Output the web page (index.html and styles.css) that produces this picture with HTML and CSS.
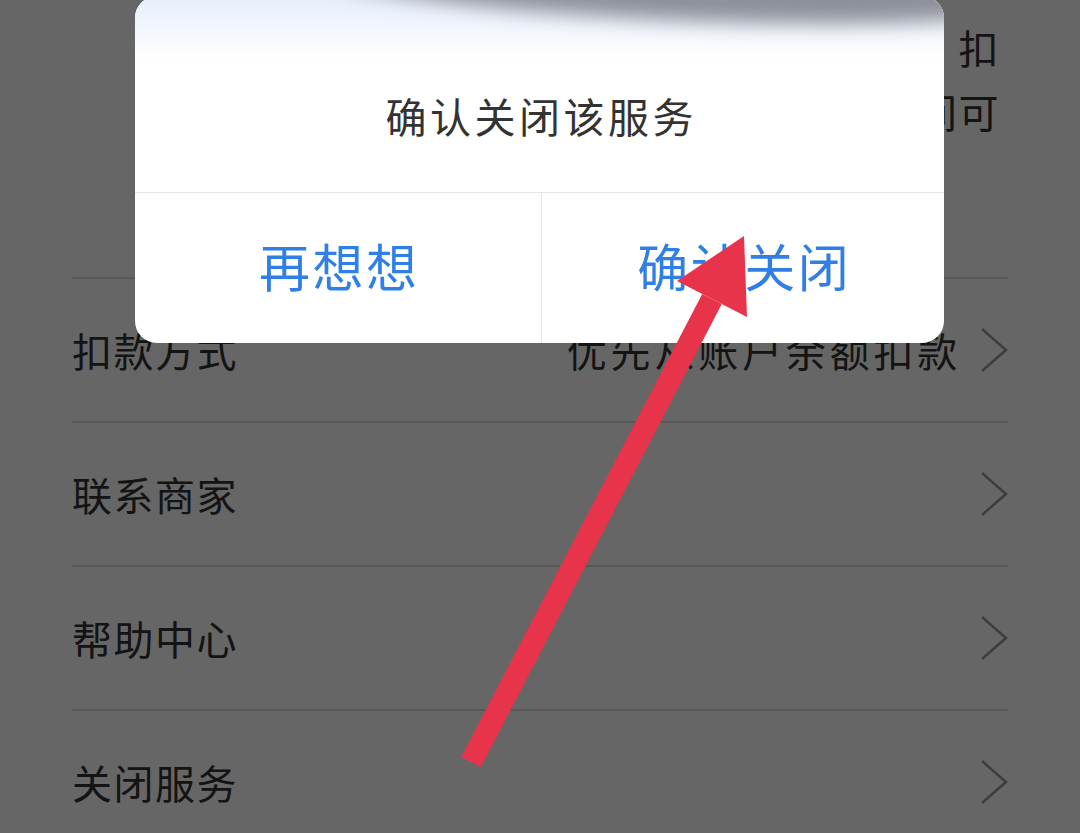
FILE: index.html
```html
<!DOCTYPE html>
<html lang="zh-CN">
<head>
<meta charset="utf-8">
<title>确认关闭该服务</title>
<link rel="stylesheet" href="styles.css">
</head>
<body>
<div class="screen">
  <div class="desc">
    <p class="desc-line">按周期自动续费、扣</p>
    <p class="desc-line">款，有效期间可</p>
  </div>
  <ul class="list">
    <li class="row">
      <span class="row-label">扣款方式</span>
      <span class="row-value">优先从账户余额扣款</span>
      <svg class="chev" viewBox="0 0 28 44"><polyline points="2,1 26,22 2,43"/></svg>
    </li>
    <li class="row">
      <span class="row-label">联系商家</span>
      <svg class="chev" viewBox="0 0 28 44"><polyline points="2,1 26,22 2,43"/></svg>
    </li>
    <li class="row">
      <span class="row-label">帮助中心</span>
      <svg class="chev" viewBox="0 0 28 44"><polyline points="2,1 26,22 2,43"/></svg>
    </li>
    <li class="row">
      <span class="row-label">关闭服务</span>
      <svg class="chev" viewBox="0 0 28 44"><polyline points="2,1 26,22 2,43"/></svg>
    </li>
  </ul>

  <div class="mask"></div>

  <div class="dialog">
    <div class="dialog-glow"></div>
    <div class="dialog-blob"></div>
    <div class="dialog-title">确认关闭该服务</div>
    <div class="dialog-actions">
      <div class="dialog-btn">再想想</div>
      <div class="dialog-btn dialog-btn-right">确认关闭</div>
    </div>
  </div>

  <svg class="arrow" viewBox="0 0 1080 833">
    <polygon points="461.2,756.9 480.8,767.1 721.8,304.1 702.2,293.9"/>
    <polygon points="744,236 677,281 747,317"/>
  </svg>
</div>
</body>
</html>
```

FILE: styles.css
```css
html, body {
  margin: 0;
  padding: 0;
  background: #666666;
}

.screen {
  position: relative;
  width: 1080px;
  height: 833px;
  overflow: hidden;
  background: #ffffff;
  font-family: "Noto Sans CJK SC", "Noto Sans", sans-serif;
  color: #333333;
}

.desc {
  padding: 15px 80px 134px 72px;
}

.desc-line {
  margin: 0;
  font-size: 40px;
  line-height: 64px;
  letter-spacing: 1.5px;
  text-align: right;
  white-space: nowrap;
  overflow: hidden;
}

.list {
  list-style: none;
  margin: 0 72px 0 72px;
  padding: 0;
}

.row {
  display: flex;
  align-items: center;
  height: 142px;
  border-top: 2px solid #dcdcdc;
}

.row-label {
  font-size: 40px;
  letter-spacing: 1.5px;
  line-height: 1;
}

.row-value {
  margin-left: auto;
  font-size: 40px;
  letter-spacing: 3.8px;
  line-height: 1;
}

.chev {
  width: 28px;
  height: 44px;
  margin-left: auto;
  fill: none;
  stroke: #999999;
  stroke-width: 2.5;
}

.row-value + .chev {
  margin-left: 19px;
}

.mask {
  position: absolute;
  inset: 0;
  background: rgba(0, 0, 0, 0.6);
}

.dialog {
  position: absolute;
  left: 135px;
  top: -4px;
  width: 809px;
  height: 347px;
  background: #ffffff;
  border-radius: 22px;
  overflow: hidden;
  display: flex;
  flex-direction: column;
}

.dialog-glow {
  position: absolute;
  left: 0;
  right: 0;
  top: 0;
  height: 64px;
  background: linear-gradient(to bottom, #e6edfb 0%, #f1f5fd 45%, #ffffff 100%);
}

.dialog-blob {
  position: absolute;
  left: 190px;
  top: -58px;
  width: 700px;
  height: 66px;
  border-radius: 50%;
  background: #8d9098;
  filter: blur(10px);
  transform: rotate(2.6deg);
  transform-origin: left center;
}

.dialog-title {
  position: relative;
  height: 154px;
  padding-top: 42px;
  display: flex;
  align-items: center;
  justify-content: center;
  border-bottom: 1px solid #e6e6e6;
  font-size: 41px;
  letter-spacing: 3.5px;
  padding-left: 3.5px;
  color: #333333;
}

.dialog-actions {
  position: relative;
  flex: 1;
  display: grid;
  grid-template-columns: 406px 1fr;
}

.dialog-btn {
  display: flex;
  align-items: center;
  justify-content: center;
  padding-bottom: 7px;
  font-size: 51px;
  letter-spacing: 2.5px;
  padding-left: 2.5px;
  color: #2f7fe6;
}

.dialog-btn-right {
  border-left: 1px solid #e6e6e6;
}

.arrow {
  position: absolute;
  left: 0;
  top: 0;
  width: 1080px;
  height: 833px;
  fill: #e8344a;
}
```
